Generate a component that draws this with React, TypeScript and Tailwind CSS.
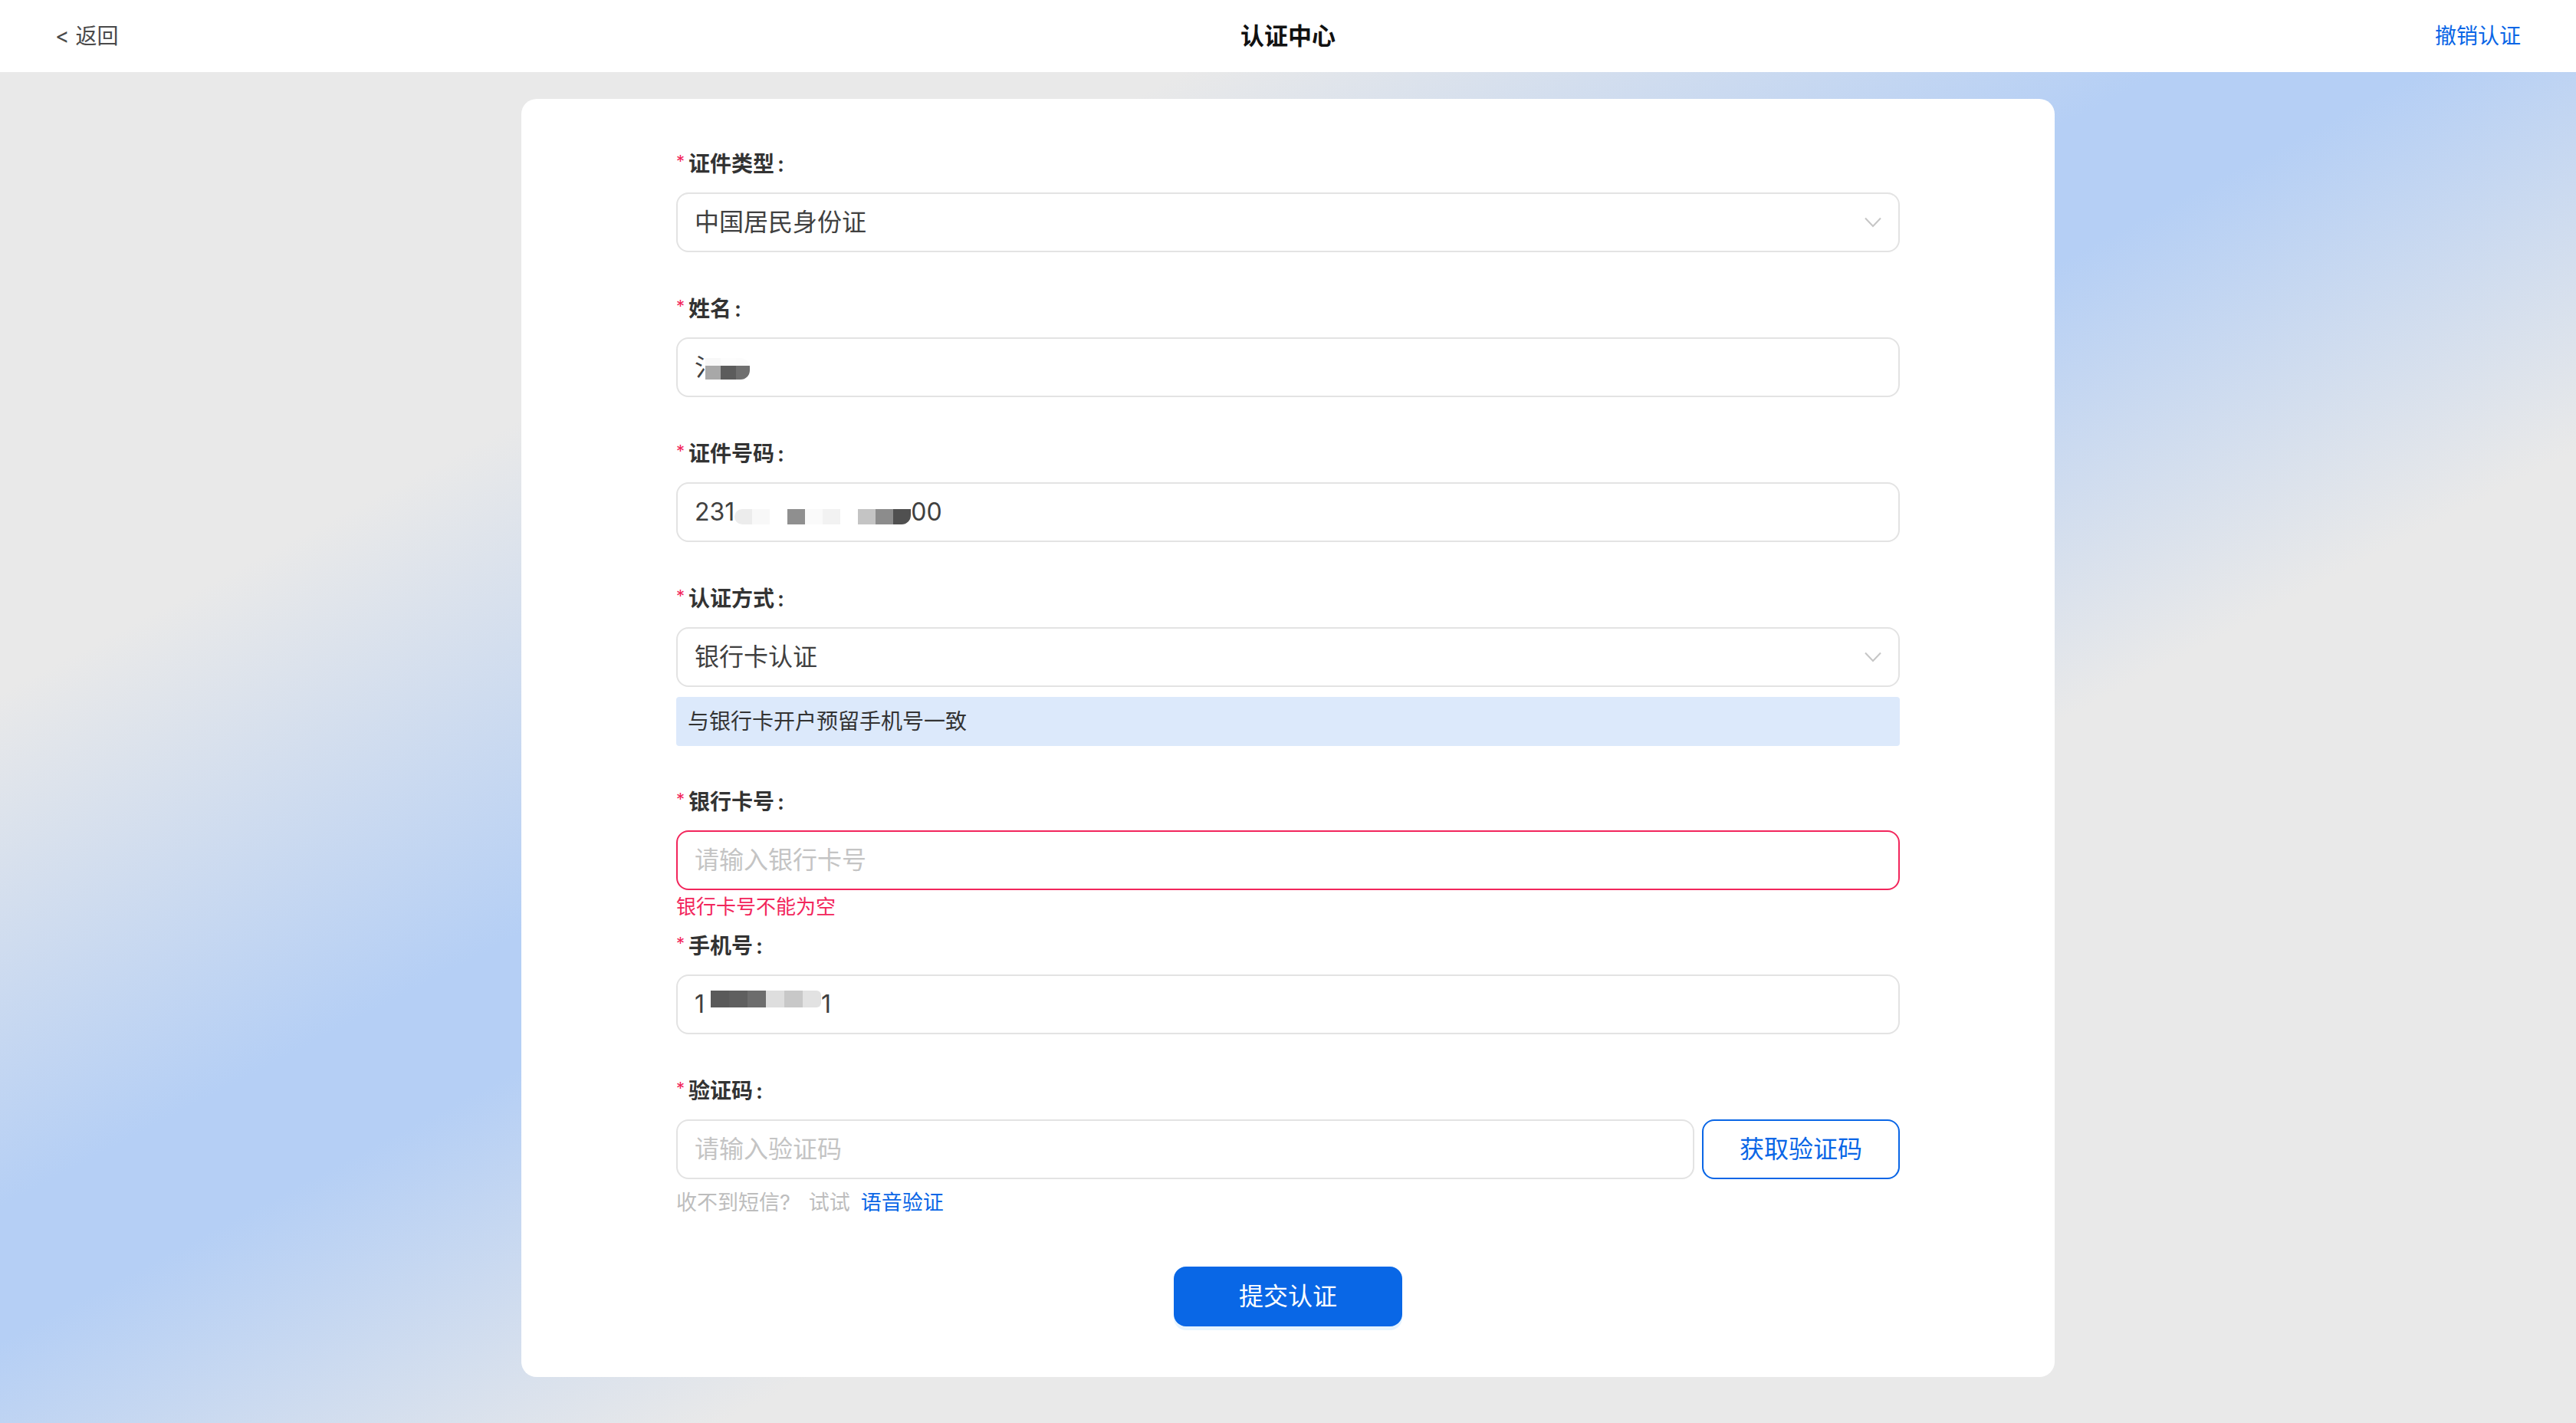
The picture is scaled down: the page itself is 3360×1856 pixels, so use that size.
import React from "react";

function Label({ children }: { children: React.ReactNode }) {
  return (
    <div className="flex h-[40px] items-center text-[28px] font-semibold leading-none text-[#333333]">
      <span className="mr-[5px] -mt-[8px] text-[22px] font-normal text-[#f2265c]">*</span>
      <span>{children}</span>
      <span className="ml-[4px]">:</span>
    </div>
  );
}

function Chevron() {
  return (
    <svg width="22" height="14" viewBox="0 0 22 14" fill="none" className="shrink-0">
      <path d="M1 1.5 L11 12 L21 1.5" stroke="#c6c6c6" strokeWidth="2" fill="none" />
    </svg>
  );
}

function Block({ c, w = 23, h = 20, cls = "" }: { c: string; w?: number; h?: number; cls?: string }) {
  return <span className={"inline-block shrink-0 " + cls} style={{ backgroundColor: c, width: w, height: h }} />;
}

const idBlocks = ["#ececec", "#f8f8f8", "#ffffff", "#8f8f8f", "#fafafa", "#f2f2f2", "#ffffff", "#c4c4c4", "#8c8c8c", "#505050"];
const phoneBlocks = ["#5a5a5a", "#5f5f5f", "#6d6d6d", "#dedede", "#c8c8c8", "#e2e2e2"];

export default function App() {
  return (
    <div className="min-h-[1856px] w-full bg-white [font-family:Inter,'Noto_Sans_CJK_SC',sans-serif]">
      {/* header */}
      <header className="flex h-[94px] items-center justify-between bg-white px-[72px]">
        <div className="w-[300px] text-[28px] text-[#4a4a4a]">&lt; 返回</div>
        <div className="text-[31px] font-semibold text-[#111111]">认证中心</div>
        <div className="flex w-[300px] justify-end text-[28px] text-[#0a66e6]">撤销认证</div>
      </header>

      {/* main */}
      <main className="min-h-[1762px] bg-[linear-gradient(to_bottom_right,#e9e9e9_23%,#b5cff5_42%,#b5cff5_47%,#e9e9e9_64%)] pt-[35px]">
        <div className="mx-auto w-[2000px] rounded-[20px] bg-white pb-[66px] pt-[65px]">
          <div className="mx-auto w-[1596px]">
            {/* 证件类型 */}
            <div className="mb-[54px]">
              <Label>证件类型</Label>
              <div className="mt-[17px] flex h-[78px] items-center justify-between rounded-[16px] border-2 border-[#e3e3e3] bg-white pl-[22px] pr-[22px] text-[32px] text-[#404040]">
                <span>中国居民身份证</span>
                <Chevron />
              </div>
            </div>

            {/* 姓名 */}
            <div className="mb-[54px]">
              <Label>姓名</Label>
              <div className="mt-[17px] flex h-[78px] items-center rounded-[16px] border-2 border-[#e3e3e3] bg-white pl-[22px] text-[32px] text-[#404040]">
                <span>氵</span>
                <span className="-ml-[18px] mt-[4px] flex flex-col overflow-hidden rounded-br-[12px] rounded-tr-[12px]">
                  <span className="flex">
                    <Block c="#f8f8f8" w={20} h={10} />
                    <Block c="#fdfdfd" w={20} h={10} />
                    <Block c="#fcfcfc" w={18} h={10} />
                  </span>
                  <span className="flex">
                    <Block c="#a8a8a8" w={20} h={18} />
                    <Block c="#5c5c5c" w={20} h={18} />
                    <Block c="#6f6f6f" w={18} h={18} />
                  </span>
                </span>
              </div>
            </div>

            {/* 证件号码 */}
            <div className="mb-[54px]">
              <Label>证件号码</Label>
              <div className="mt-[17px] flex h-[78px] items-center rounded-[16px] border-2 border-[#e3e3e3] bg-white pl-[22px] text-[32px] text-[#404040]">
                <span>231</span>
                <span className="mt-[12px] flex">
                  {idBlocks.map((c, i) => (
                    <Block key={i} c={c} cls={i === 0 ? "rounded-l-[10px]" : i === idBlocks.length - 1 ? "rounded-br-[12px]" : ""} />
                  ))}
                </span>
                <span>00</span>
              </div>
            </div>

            {/* 认证方式 */}
            <div className="mb-[53px]">
              <Label>认证方式</Label>
              <div className="mt-[17px] flex h-[78px] items-center justify-between rounded-[16px] border-2 border-[#e3e3e3] bg-white pl-[22px] pr-[22px] text-[32px] text-[#404040]">
                <span>银行卡认证</span>
                <Chevron />
              </div>
              <div className="mt-[13px] flex h-[64px] items-center rounded-[4px] bg-[#dce9fb] pl-[15px] text-[28px] text-[#333333]">
                与银行卡开户预留手机号一致
              </div>
            </div>

            {/* 银行卡号 */}
            <div>
              <Label>银行卡号</Label>
              <div className="mt-[17px] flex h-[78px] items-center rounded-[16px] border-2 border-[#f2265c] bg-white pl-[22px] text-[32px] text-[#c4c4c4]">
                请输入银行卡号
              </div>
              <div className="h-[53px] text-[26px] leading-[44px] text-[#f2265c]">银行卡号不能为空</div>
            </div>

            {/* 手机号 */}
            <div className="mb-[54px]">
              <Label>手机号</Label>
              <div className="mt-[17px] flex h-[78px] items-center rounded-[16px] border-2 border-[#e3e3e3] bg-white pl-[22px] text-[32px] text-[#404040]">
                <span>1</span>
                <span className="-mt-[14px] ml-[8px] flex">
                  {phoneBlocks.map((c, i) => (
                    <Block key={i} c={c} w={24} h={22} cls={i === phoneBlocks.length - 1 ? "rounded-r-[6px]" : ""} />
                  ))}
                </span>
                <span>1</span>
              </div>
            </div>

            {/* 验证码 */}
            <div>
              <Label>验证码</Label>
              <div className="mt-[17px] flex h-[78px] gap-[10px]">
                <div className="flex flex-1 items-center rounded-[16px] border-2 border-[#e3e3e3] bg-white pl-[22px] text-[32px] text-[#c4c4c4]">
                  请输入验证码
                </div>
                <button className="flex w-[258px] items-center justify-center rounded-[16px] border-2 border-[#0a66e6] bg-white text-[32px] text-[#0a66e6]">
                  获取验证码
                </button>
              </div>
              <div className="mt-[9px] flex h-[44px] items-center text-[27px] text-[#bdbdbd]">
                <span>收不到短信?</span>
                <span className="ml-[24px]">试试</span>
                <span className="ml-[14px] text-[#0a66e6]">语音验证</span>
              </div>
            </div>

            {/* submit */}
            <div className="mt-[61px] flex justify-center">
              <button className="flex h-[78px] w-[298px] items-center justify-center rounded-[16px] bg-[#0967e6] text-[32px] text-white shadow-[0_5px_0_rgba(5,145,255,0.1)]">
                提交认证
              </button>
            </div>
          </div>
        </div>
      </main>
    </div>
  );
}
